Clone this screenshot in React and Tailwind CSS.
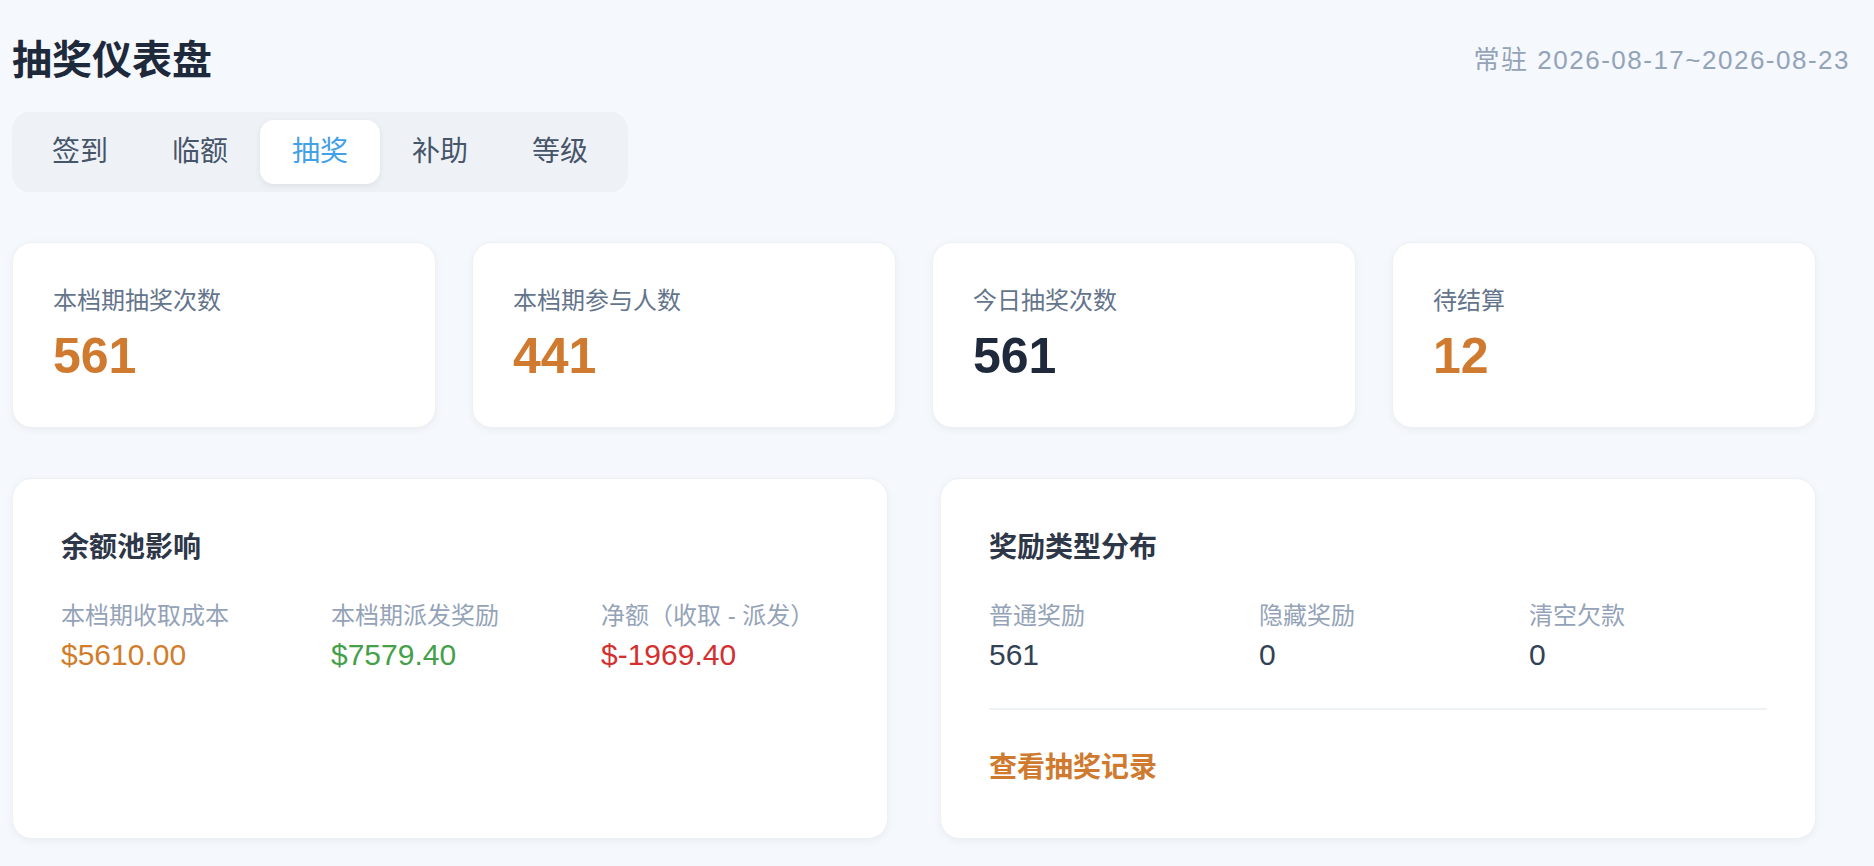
const tabs = ['签到', '临额', '抽奖', '补助', '等级'];

const stats = [
  { label: '本档期抽奖次数', value: '561', tone: 'text-[#cf7a2e]' },
  { label: '本档期参与人数', value: '441', tone: 'text-[#cf7a2e]' },
  { label: '今日抽奖次数', value: '561', tone: 'text-[#1e293b]' },
  { label: '待结算', value: '12', tone: 'text-[#cf7a2e]' },
];

const pool = [
  { label: '本档期收取成本', value: '$5610.00', tone: 'text-[#d17d2c]' },
  { label: '本档期派发奖励', value: '$7579.40', tone: 'text-[#45a04a]' },
  { label: '净额（收取 - 派发）', value: '$-1969.40', tone: 'text-[#d3302f]' },
];

const rewards = [
  { label: '普通奖励', value: '561' },
  { label: '隐藏奖励', value: '0' },
  { label: '清空欠款', value: '0' },
];

function Card({ className = '', children }) {
  return (
    <div
      className={`bg-white rounded-[20px] border border-[#edf1f6] shadow-[0_2px_8px_rgba(15,23,42,0.05)] ${className}`}
    >
      {children}
    </div>
  );
}

export default function App() {
  const active = '抽奖';

  return (
    <div className="min-h-screen bg-[#f5f8fc] pl-3 pt-[34px] pb-[29px] font-['Liberation_Sans','Noto_Sans_CJK_SC',sans-serif]">
      <div className="flex items-center justify-between pr-[24px]">
        <h1 className="text-[40px] leading-[52px] font-bold text-[#1e293b]">抽奖仪表盘</h1>
        <div className="text-[26px] leading-[32px] tracking-[1.5px] text-[#94a3b8]">常驻 2026-08-17~2026-08-23</div>
      </div>

      <div className="mt-[26px] inline-flex p-2 rounded-[18px] bg-[#eef2f7]">
        {tabs.map((t) => (
          <button
            key={t}
            type="button"
            className={`w-[120px] h-[64px] rounded-[14px] text-[28px] ${
              t === active
                ? 'bg-white text-[#42a0e6] shadow-[0_2px_6px_rgba(15,23,42,0.08)]'
                : 'text-[#475569]'
            }`}
          >
            {t}
          </button>
        ))}
      </div>

      <div className="w-[1804px]">
        <div className="mt-[50px] grid grid-cols-4 gap-[36px]">
          {stats.map((s) => (
            <Card key={s.label} className="px-[40px] pt-[42px] pb-[46px]">
              <div className="text-[24px] leading-[32px] text-[#64748b]">{s.label}</div>
              <div className={`mt-[14px] text-[50px] leading-[50px] font-bold ${s.tone}`}>{s.value}</div>
            </Card>
          ))}
        </div>

        <div className="mt-[50px] grid grid-cols-2 gap-[52px]">
          <Card className="px-[48px] pt-[51px] pb-[52px]">
            <h2 className="text-[28px] leading-[36px] font-semibold text-[#2d3748]">余额池影响</h2>
            <div className="mt-[34px] grid grid-cols-3 gap-8">
              {pool.map((p) => (
                <div key={p.label}>
                  <div className="text-[24px] leading-[32px] text-[#94a3b8]">{p.label}</div>
                  <div className={`mt-[5px] text-[30px] leading-[36px] ${p.tone}`}>{p.value}</div>
                </div>
              ))}
            </div>
          </Card>

          <Card className="px-[48px] pt-[51px] pb-[52px]">
            <h2 className="text-[28px] leading-[36px] font-semibold text-[#2d3748]">奖励类型分布</h2>
            <div className="mt-[34px] grid grid-cols-3 gap-8">
              {rewards.map((r) => (
                <div key={r.label}>
                  <div className="text-[24px] leading-[32px] text-[#94a3b8]">{r.label}</div>
                  <div className="mt-[5px] text-[30px] leading-[36px] text-[#334155]">{r.value}</div>
                </div>
              ))}
            </div>
            <div className="mt-[35px] border-t-2 border-[#eef2f6]" />
            <a href="#records" className="mt-[40px] block text-[28px] leading-[36px] font-bold text-[#cf7a2e]">
              查看抽奖记录
            </a>
          </Card>
        </div>
      </div>
    </div>
  );
}
